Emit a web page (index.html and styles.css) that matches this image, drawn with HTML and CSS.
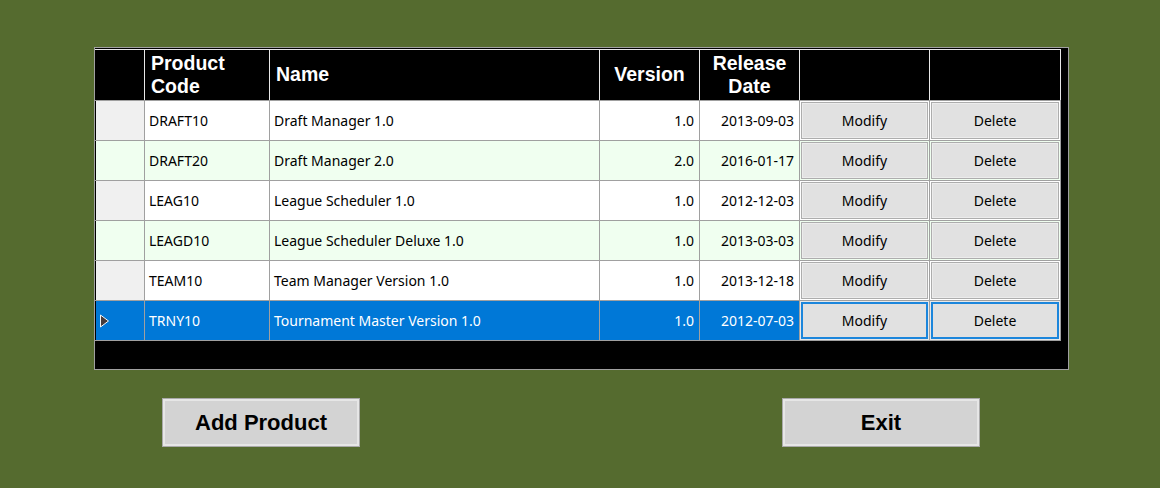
FILE: index.html
```html
<!DOCTYPE html>
<html>
<head>
<meta charset="utf-8">
<link rel="stylesheet" href="styles.css">
</head>
<body>
<div class="grid">
  <table class="dgv">
    <colgroup>
      <col class="c-rh"><col class="c-code"><col class="c-name"><col class="c-ver"><col class="c-date"><col class="c-btn"><col class="c-btn2">
    </colgroup>
    <thead>
      <tr>
        <th class="rh"></th>
        <th class="left">Product<br>Code</th>
        <th class="left">Name</th>
        <th>Version</th>
        <th>Release<br>Date</th>
        <th></th>
        <th></th>
      </tr>
    </thead>
    <tbody>
      <tr>
        <td class="rh"></td><td>DRAFT10</td><td>Draft Manager 1.0</td><td class="num">1.0</td><td class="num">2013-09-03</td>
        <td class="bc"><span class="cb">Modify</span></td><td class="bc"><span class="cb">Delete</span></td>
      </tr>
      <tr class="alt">
        <td class="rh"></td><td>DRAFT20</td><td>Draft Manager 2.0</td><td class="num">2.0</td><td class="num">2016-01-17</td>
        <td class="bc"><span class="cb">Modify</span></td><td class="bc"><span class="cb">Delete</span></td>
      </tr>
      <tr>
        <td class="rh"></td><td>LEAG10</td><td>League Scheduler 1.0</td><td class="num">1.0</td><td class="num">2012-12-03</td>
        <td class="bc"><span class="cb">Modify</span></td><td class="bc"><span class="cb">Delete</span></td>
      </tr>
      <tr class="alt">
        <td class="rh"></td><td>LEAGD10</td><td>League Scheduler Deluxe 1.0</td><td class="num">1.0</td><td class="num">2013-03-03</td>
        <td class="bc"><span class="cb">Modify</span></td><td class="bc"><span class="cb">Delete</span></td>
      </tr>
      <tr>
        <td class="rh"></td><td>TEAM10</td><td>Team Manager Version 1.0</td><td class="num">1.0</td><td class="num">2013-12-18</td>
        <td class="bc"><span class="cb">Modify</span></td><td class="bc"><span class="cb">Delete</span></td>
      </tr>
      <tr class="sel">
        <td class="rh"><svg class="arrow" width="11" height="14" viewBox="0 0 11 14"><polygon points="1.5,1 9.5,7 1.5,13" fill="#463a3a" stroke="#f4f4f4" stroke-width="1"/></svg></td><td>TRNY10</td><td>Tournament Master Version 1.0</td><td class="num">1.0</td><td class="num">2012-07-03</td>
        <td class="bc"><span class="cb">Modify</span></td><td class="bc"><span class="cb">Delete</span></td>
      </tr>
    </tbody>
  </table>
</div>
<div class="actions">
  <button class="big">Add Product</button>
  <button class="big">Exit</button>
</div>
</body>
</html>
```

FILE: styles.css
```css
html, body {
  margin: 0;
  padding: 0;
}
body {
  background: #556b2f;
  width: 1160px;
  height: 488px;
  overflow: hidden;
  padding: 47px 0 0 94px;
  box-sizing: border-box;
  font-family: "Noto Sans", "Open Sans", sans-serif;
}
.grid {
  width: 973px;
  height: 320px;
  border: 1px solid #a0a0a0;
  background: #000;
  padding: 1px 0 0 0;
  box-sizing: content-box;
}
.dgv {
  border-collapse: collapse;
  table-layout: fixed;
  width: 965px;
  margin: 0;
}
.c-rh { width: 49px; }
.c-code { width: 125px; }
.c-name { width: 330px; }
.c-ver { width: 100px; }
.c-date { width: 100px; }
.c-btn { width: 130px; }
.c-btn2 { width: 131px; }

.dgv thead tr {
  height: 51px;
}
.dgv tbody tr {
  height: 40px;
}
.dgv th {
  background: #000;
  color: #fff;
  font-family: "Liberation Sans", Arial, sans-serif;
  font-weight: bold;
  font-size: 19.5px;
  line-height: 23.5px;
  padding: 0;
  text-align: center;
  border-top: 1px solid #e8e8e8;
  border-right: 1px solid #e8e8e8;
  border-bottom: 1px solid #a0a0a0;
  vertical-align: middle;
}
.dgv th.rh {
  border-left: 1px solid #000;
}
.dgv th.left {
  text-align: left;
  padding-left: 6px;
}
.dgv td {
  padding: 0 0 0 4px;
  font-size: 14px;
  color: #000;
  background: #fff;
  border-right: 1px solid #a0a0a0;
  border-bottom: 1px solid #a0a0a0;
  white-space: nowrap;
  overflow: hidden;
  vertical-align: middle;
}
.dgv tr.alt td {
  background: #f0fff0;
}
.dgv td.rh {
  background: #f0f0f0;
  padding: 0;
  border-left: 1px solid #000;
}
.dgv td.num {
  text-align: right;
  padding: 0 5px 0 0;
}
.dgv td.bc {
  padding: 1px;
}
.cb {
  display: flex;
  align-items: center;
  justify-content: center;
  height: 37px;
  box-sizing: border-box;
  background: #e1e1e1;
  border: 1px solid #adadad;
  box-shadow: inset 0 0 0 1px #ececec;
  font-size: 14px;
  color: #000;
}
.dgv tr.sel td {
  background: #0078d7;
  color: #fff;
}
.dgv tr.sel td.rh {
  border-left: 1px solid #000;
}
.dgv tr.sel td.bc {
  background: #e8e8e8;
}
.dgv tr.sel .cb {
  border: 2px solid #1c86dc;
  box-shadow: none;
}
.arrow {
  display: block;
  margin-left: 3px;
}
.actions {
  display: flex;
  gap: 422px;
  margin-top: 28px;
  padding-left: 68px;
}
.big {
  width: 198px;
  height: 49px;
  margin: 0;
  padding: 0;
  background: #d3d3d3;
  border: 1px solid #a9a9a9;
  box-shadow: inset 0 0 0 2px #e6e6e6;
  font-family: "Liberation Sans", Arial, sans-serif;
  font-weight: bold;
  font-size: 22px;
  color: #000;
}
```
